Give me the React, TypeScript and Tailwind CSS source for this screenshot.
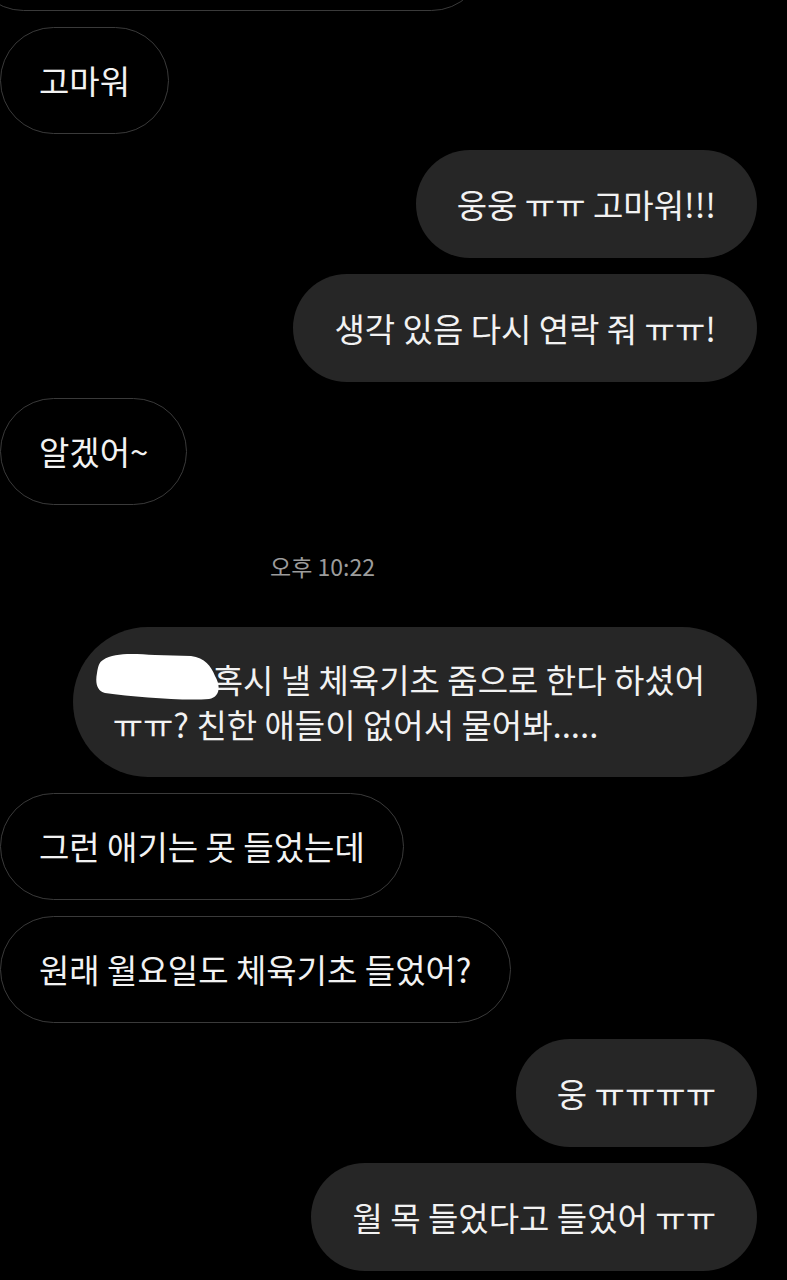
import React from "react";

const font = { fontFamily: '"Noto Sans CJK KR", "Noto Sans", sans-serif' };

function Received({ children }: { children: React.ReactNode }) {
  return (
    <div className="flex justify-start">
      <div className="rounded-full border-[1.5px] border-[#3a3a3a] px-[38px] py-[30px] text-[33px] leading-[45px] text-[#f2f2f2] whitespace-nowrap">
        {children}
      </div>
    </div>
  );
}

function Sent({ children }: { children: React.ReactNode }) {
  return (
    <div className="flex justify-end pr-[30px]">
      <div className="rounded-full bg-[#262626] px-[41px] py-[31.5px] text-[33px] leading-[45px] text-[#f2f2f2] whitespace-nowrap">
        {children}
      </div>
    </div>
  );
}

export default function App() {
  return (
    <div className="w-[787px] h-[1280px] overflow-hidden bg-black" style={font}>
      <div className="flex flex-col gap-[16px] mt-[-96px]">
        <div className="flex justify-start">
          <div className="ml-[-30px] w-[515px] h-[107px] rounded-full border-[1.5px] border-[#3a3a3a]" />
        </div>
        <Received>고마워</Received>
        <Sent>웅웅 ㅠㅠ 고마워!!!</Sent>
        <Sent>생각 있음 다시 연락 줘 ㅠㅠ!</Sent>
        <Received>알겠어~</Received>
        <div className="h-[90px] flex items-center pl-[270px]">
          <span className="text-[23px] text-[#9c9c9c]">오후 10:22</span>
        </div>
        <div className="flex justify-end pr-[30px]">
          <div className="relative rounded-[75px] bg-[#262626] pl-[40px] pr-[52px] py-[30px] text-[33px] leading-[45px] text-[#f2f2f2] whitespace-nowrap">
            <span className="inline-block w-[100px]" />
            혹시 낼 체육기초 줌으로 한다 하셨어
            <br />
            ㅠㅠ? 친한 애들이 없어서 물어봐.....
            <svg className="absolute left-[22px] top-[25px]" width="124" height="50" viewBox="0 0 124 50">
              <path
                d="M 8 8 C 20 0, 40 2, 60 3 L 96 4 C 110 6, 116 14, 120 24 C 126 34, 125 45, 114 47 C 88 49, 40 45, 10 41 C 2 39, 0 31, 2 21 C 3 15, 4 10, 8 8 Z"
                fill="#ffffff"
              />
            </svg>
          </div>
        </div>
        <Received>그런 애기는 못 들었는데</Received>
        <Received>원래 월요일도 체육기초 들었어?</Received>
        <Sent>웅 ㅠㅠㅠㅠ</Sent>
        <Sent>월 목 들었다고 들었어 ㅠㅠ</Sent>
      </div>
    </div>
  );
}
